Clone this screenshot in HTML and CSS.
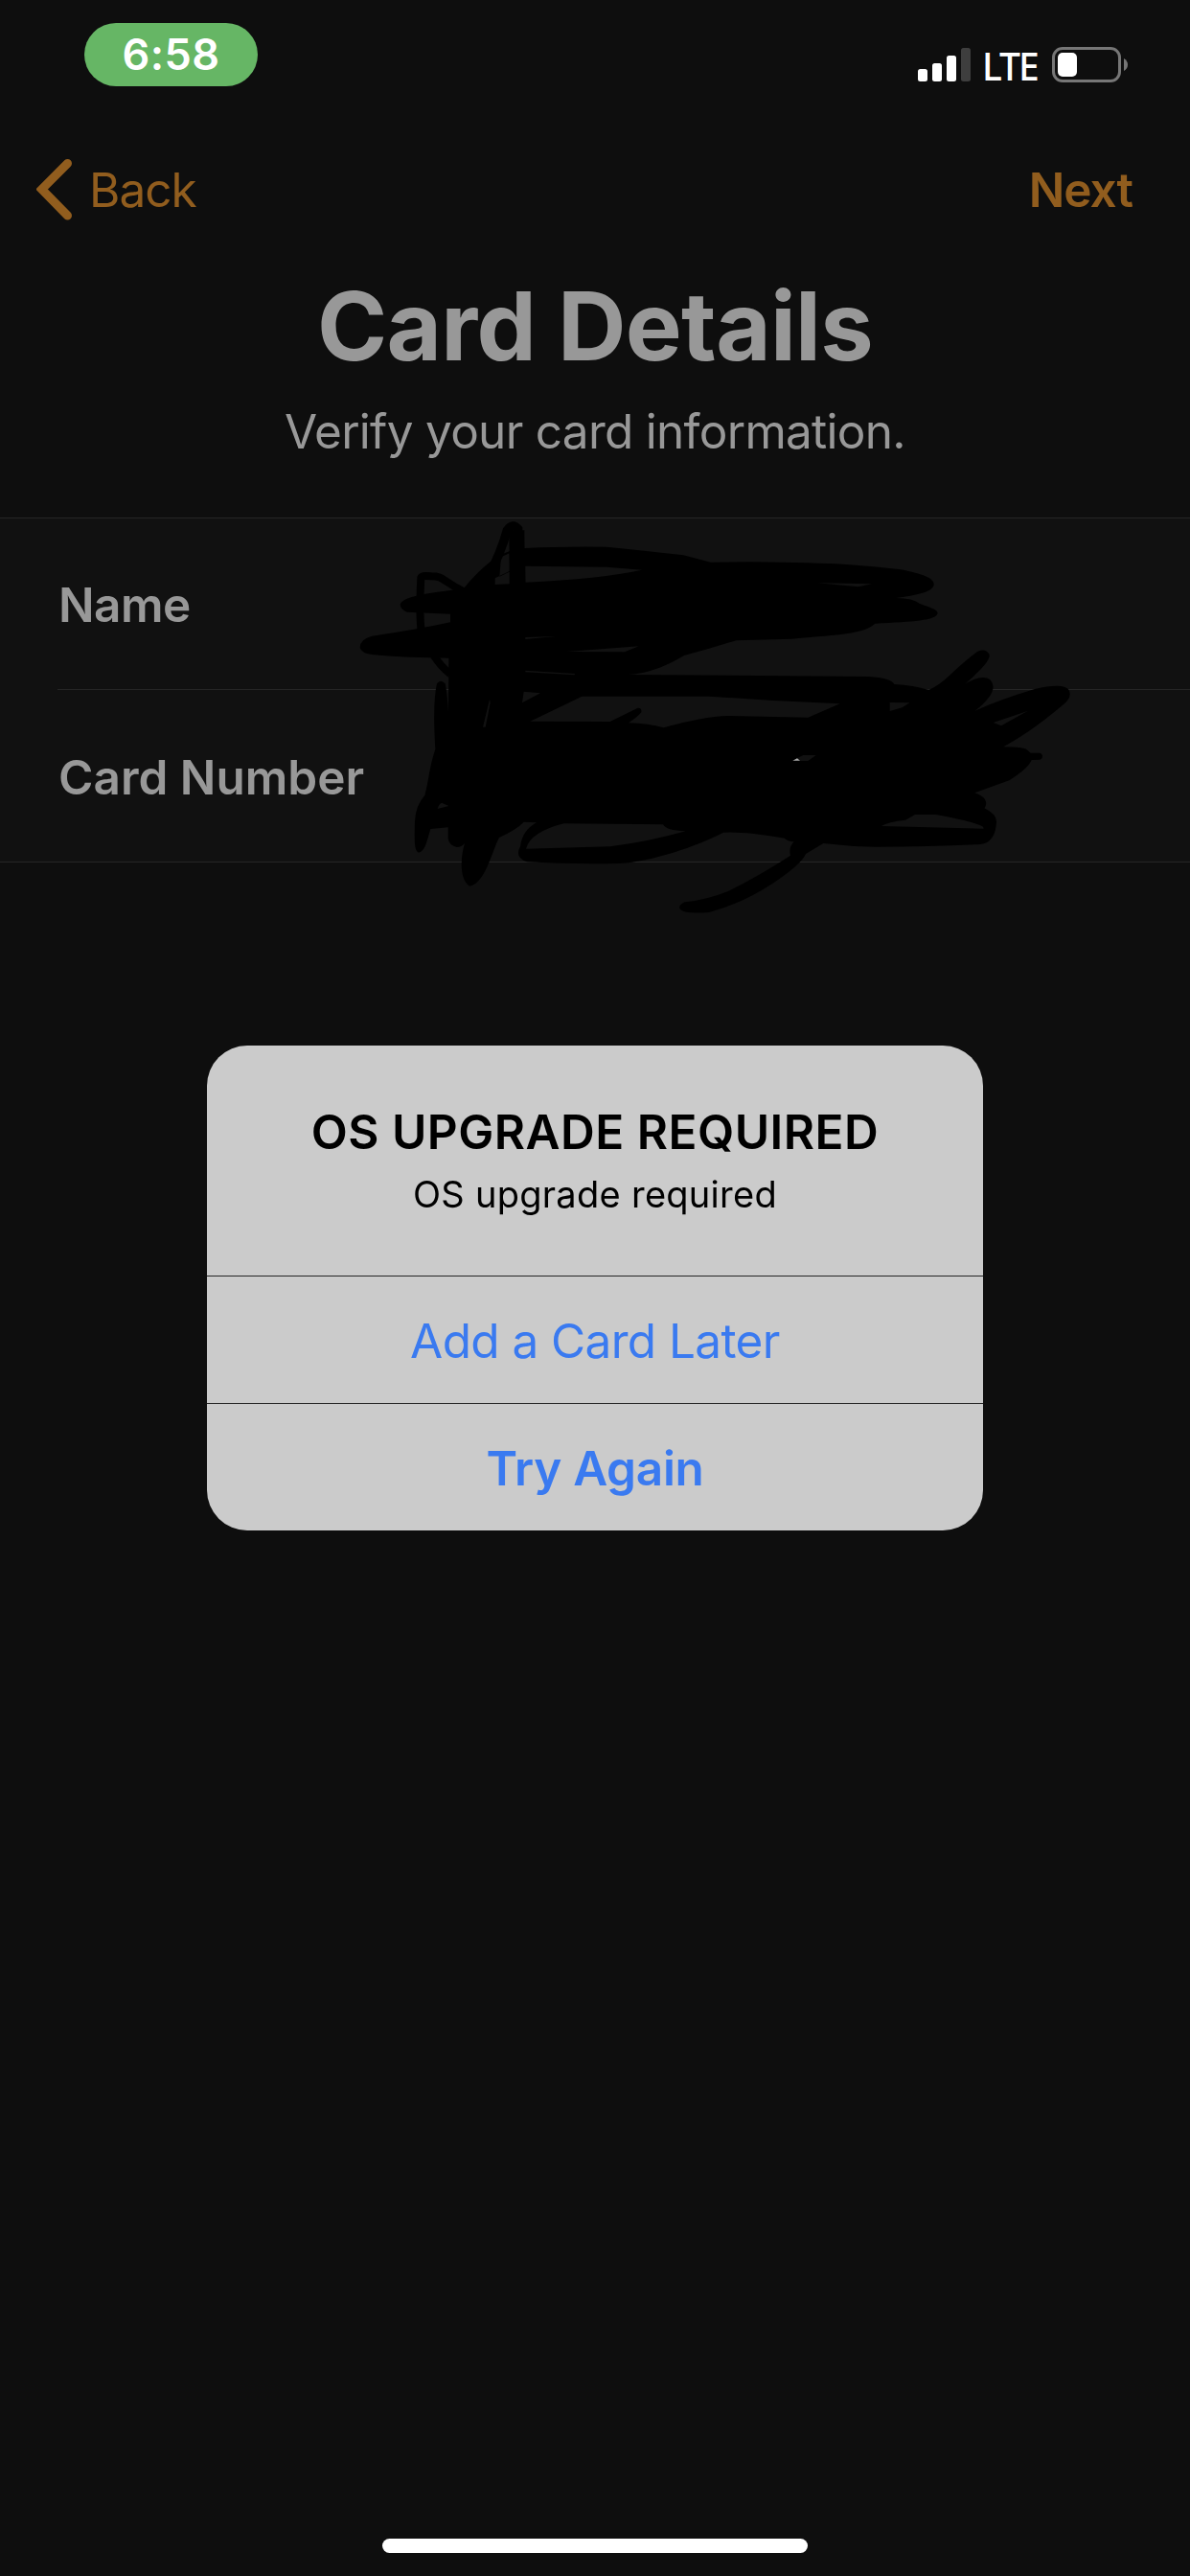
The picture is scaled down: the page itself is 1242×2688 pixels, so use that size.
FILE: index.html
```
<!doctype html>
<html lang="en">
<head>
	<meta charset="UTF-8"/>
	<title>Card Details</title>
	<link rel="stylesheet" href="styles.css">
</head>
<body>
	<div class="wrap">
		<div class="status">
			<span class="time">6:58</span>
			<div class="statusRight">
				<svg class="signal" viewBox="0 0 55 35">
					<rect x="0" y="22" width="10" height="13" rx="2.5"/>
					<rect x="15" y="16" width="10" height="19" rx="2.5"/>
					<rect x="30" y="8" width="10" height="27" rx="2.5"/>
					<rect class="off" x="45" y="0" width="10" height="35" rx="2.5"/>
				</svg>
				<span class="network">LTE</span>
				<svg class="battery" viewBox="0 0 79 37">
					<rect class="case" x="1.5" y="1.5" width="69" height="34" rx="9.5"/>
					<rect class="level" x="6" y="6" width="20" height="25" rx="5"/>
					<path class="nub" d="M75 12 Q79 14.500 79 18.500 T75 25 Z"/>
				</svg>
			</div>
		</div>

		<div class="nav">
			<a href="#" class="back">
				<svg class="arrow" viewBox="0 0 37 64"><path d="M32.500 4.500 L5.500 31.500 L32.500 59"/></svg>
				<span>Back</span>
			</a>
			<a href="#" class="next">Next</a>
		</div>

		<h1 class="title">Card Details</h1>
		<p class="desc">Verify your card information.</p>

		<div class="listWrap">
			<ul class="list">
				<li>Name</li>
				<li class="number">Card Number</li>
			</ul>
			<!-- scribble over name, card number -->
			<svg class="scribble" viewBox="0 0 2700 1290">
				<path class="fill" fill-rule="evenodd" d="
					M372 252 C420 195 480 130 565 126 Q680 120 820 122 Q960 136 1060 148 L1145 170 L1270 169 Q1480 172 1560 176 Q1660 183 1740 193 C1810 207 1845 220 1844 240 C1843 262 1790 274 1725 282 Q1780 282 1800 300 C1850 317 1856 322 1856 330 C1850 353 1780 356 1660 362 C1620 395 1560 395 1400 410 L1225 415 L1140 440 L1062 462 Q970 518 885 522
					L1640 528 Q1710 532 1720 552 Q1780 555 1828 570 Q1860 555 1890 527 Q1945 475 1980 450 Q2008 438 2018 460 C2020 475 2000 500 1942 551 C1975 530 2005 525 2020 538 C2040 560 2030 590 1973 635 Q2050 600 2160 567 C2220 552 2255 555 2265 568 C2276 585 2268 600 2250 615 Q2150 700 2062 748 Q2125 748 2135 757 L2147 767 L2175 767 Q2184 769 2184 777 Q2184 787 2175 788 L2150 789 Q2140 815 2080 853 L1972 892 C2010 905 2013 925 2002 940 Q2043 960 2040 985 Q2036 1048 1990 1053 Q1840 1061 1660 1061 Q1580 1060 1498 1050 L1443 1083 Q1430 1115 1340 1175 Q1240 1240 1140 1266 Q1065 1272 1050 1257 Q1041 1245 1064 1234 Q1130 1228 1200 1200 Q1300 1150 1395 1088 Q1388 1063 1406 1045 Q1385 1043 1376 1034 Q1250 1012 1185 1016 C1100 1060 960 1107 860 1113 Q700 1116 570 1108 Q530 1095 549 1060 Q555 1010 600 985 L560 983 Q540 1005 483 1032 C460 1075 440 1175 390 1184 C360 1165 360 1100 375 1050 Q365 1062 350 1062 Q325 1055 323 1035 L323 1000 L268 1005 C255 1050 250 1075 231 1079 C215 1075 218 1030 219 980 Q222 930 250 900 C264 850 262 820 283 755 Q274 610 288 550 Q300 535 314 550 Q320 575 324 640
					L325 470 Q200 470 90 460 Q50 455 47 437 Q48 410 85 401 Q220 382 330 358 L330 332 L195 326 Q173 317 173 302 C180 285 210 273 330 258 Z
					M565 182 L565 233 Q800 222 930 194 L820 185 Z
					M489 154 L484 215 L515 200 L515 142 Z
					M470 220 L470 240 L515 238 L515 198 Z
					M1480 235 L1650 238 L1607 247 Z
					M565 405 L660 402 L565 411 Z
					M695 450 L920 433 L876 451 Z
					M565 509 L720 519 L719 523 L565 514 Z
					M453 600 L432 686 L440 686 L455 610 Z
					M560 575 L612 580 L555 610 Z
					M742 590 L1140 590 L1340 603 L1550 613 L1450 656 L1200 651 Q1120 653 998 688 Q950 675 888 673 Q915 655 928 640 Q930 625 917 626 L830 669 L580 668 Z
					M1706 609 L1768 610 L1745 625 L1706 636 Z
					M2030 672 L2137 636 L2055 682 Z
					M1406 792 L1415 784 L1435 774 L1475 774 L1450 792 Z
					M290 942 Q295 925 303 923 L325 933 Z
					M685 988 Q580 1015 567 1067 L830 1060 Q950 1045 1067 1012 Q1005 1010 996 991 Z
					M1680 996 Q1700 982 1755 977 L1785 960 L1850 960 Q1970 982 1998 998 L2000 1004 Z"/>
				<path class="glint" d="M1402 791 L1416 784 L1425 791 Z"/>
				<path class="thin" d="M372 262 C300 225 310 214 270 214 Q240 210 238 218 C234 300 233 350 240 390 C255 430 290 490 330 520"/>
				<path class="mid" d="M455 200 Q485 150 508 70 Q525 45 542 66 L545 140"/>
				<path class="wide" d="M538 70 Q538 120 541 240"/>
			</svg>
		</div>

		<div class="home"></div>
	</div>

	<div class="layer">
		<div class="layerTop">
			<strong>OS UPGRADE REQUIRED</strong>
			<p>OS upgrade required</p>
		</div>
		<a href="#" class="bt">Add a Card Later</a>
		<a href="#" class="bt again">Try Again</a>
	</div>
</body>
</html>
```
FILE: styles.css
```
*				{ padding:0; margin:0; box-sizing:border-box; }
body			{ background:#0e0e0e; font-family:Inter,"Liberation Sans",sans-serif; font-size:49.5px; color:#989898; }
ul				{ list-style-type:none; }
a				{ text-decoration:none; }
svg				{ display:block; }
.wrap			{ display:flex; flex-direction:column; width:1242px; height:2688px; overflow:hidden; }

.status			{ display:flex; justify-content:space-between; align-items:flex-start; height:132px; padding:24px 65px 0 88px; }
.time			{ width:181px; height:66px; line-height:66px; border-radius:33px; background:#66b665; color:#fff; font-size:45px; font-weight:600; letter-spacing:0.5px; text-align:center; }
.statusRight	{ display:flex; align-items:flex-start; padding-top:25px; }
.signal			{ width:55px; height:35px; margin-top:1px; fill:#fff; }
.signal .off	{ fill:#3e3e3e; }
.network		{ width:85px; padding-left:12px; line-height:40px; font-family:"Noto Sans",sans-serif; font-size:39px; font-weight:500; letter-spacing:-2px; color:#fff; }
.battery		{ width:79px; height:37px; }
.case			{ fill:none; stroke:#767676; stroke-width:3; }
.level			{ fill:#fff; }
.nub			{ fill:#767676; }

.nav			{ display:flex; justify-content:space-between; align-items:center; height:132px; padding:0 60px 0 38px; }
.nav a			{ color:#915d1e; }
.back			{ display:flex; align-items:center; gap:18px; letter-spacing:-1px; }
.arrow			{ width:37px; height:64px; fill:none; stroke:#915d1e; stroke-width:9; stroke-linecap:round; }
.next			{ font-weight:600; letter-spacing:-1px; }

.title			{ height:120px; margin-top:16px; line-height:120px; font-size:99px; font-weight:700; letter-spacing:-0.7px; text-align:center; }
.desc			{ height:60px; margin-top:20px; line-height:60px; letter-spacing:-0.72px; text-align:center; }

.listWrap		{ position:relative; margin-top:60px; }
.list			{ border-top:1px solid #252525; border-bottom:1px solid #252525; background:#111; }
.list li		{ height:178px; padding-left:61px; line-height:180px; font-weight:600; letter-spacing:-0.5px; }
.list .number	{ height:180px; margin-left:60px; padding-left:1px; border-top:1px solid #252525; line-height:182px; letter-spacing:0; }
.scribble		{ position:absolute; top:-10px; left:360px; width:900px; height:430px; }
.fill			{ fill:#000; }
.glint			{ fill:#aaa; }
.thin			{ fill:none; stroke:#000; stroke-width:24; }
.mid			{ fill:none; stroke:#000; stroke-width:28; }
.wide			{ fill:none; stroke:#000; stroke-width:48; }

.home			{ width:444px; height:15px; margin:auto auto 24px; border-radius:8px; background:#fff; }

/* alert */
.layer			{ position:fixed; top:1091px; left:216px; width:810px; height:506px; border-radius:42px; background:#cbcbcb; overflow:hidden; text-align:center; }
.layerTop		{ height:240px; padding-top:60px; color:#000; }
.layerTop strong	{ display:block; line-height:60px; font-weight:600; letter-spacing:0.48px; }
.layerTop p		{ margin-top:11px; line-height:48px; font-size:38px; letter-spacing:0.28px; }
.bt				{ display:block; height:133px; border-top:1px solid #252525; line-height:134px; letter-spacing:-0.6px; color:#3a7af0; }
.again			{ font-weight:600; letter-spacing:-0.3px; }
```
